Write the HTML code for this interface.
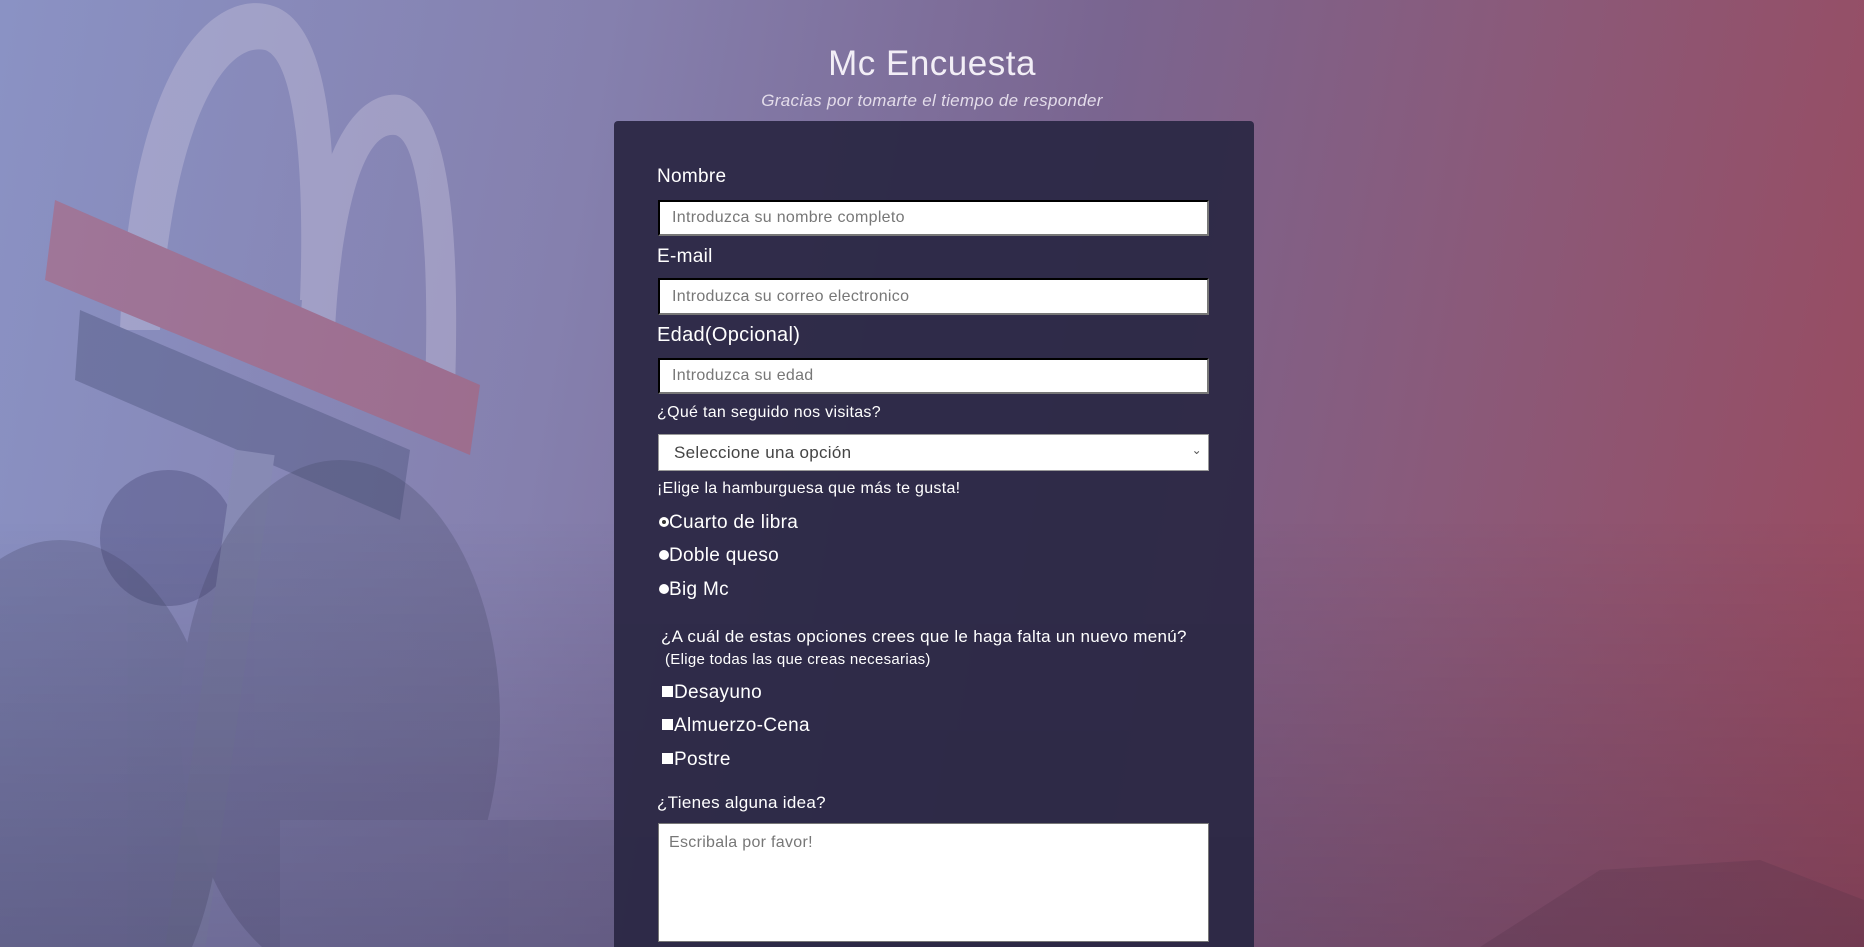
<!DOCTYPE html>
<html><head><meta charset="utf-8"><style>
*{box-sizing:border-box;margin:0;padding:0}
html,body{width:1864px;height:947px;overflow:hidden}
body{font-family:"Liberation Sans",sans-serif;position:relative;
background:linear-gradient(100deg,#8a92c4 0%,#8580ae 30%,#7a6590 55%,#8a5a7a 75%,#9a4a5e 100%);}
.bg{position:absolute;left:0;top:0}
.shade{position:absolute;left:0;top:0;width:1864px;height:947px;
background:linear-gradient(180deg,rgba(0,0,0,0) 55%,rgba(40,30,60,.25) 100%);}
h1{position:absolute;left:0;width:1864px;top:44px;text-align:center;font-weight:400;font-size:35px;color:#f2eef6;letter-spacing:.5px}
.sub{position:absolute;left:0;width:1864px;top:91px;text-align:center;font-style:italic;font-size:17px;color:#e3dcea;letter-spacing:.3px}
.panel{position:absolute;left:614px;top:121px;width:640px;height:826px;background:rgba(42,39,68,.94);border-radius:4px 4px 0 0}
.t{position:absolute;color:#fff;white-space:nowrap;letter-spacing:.3px}
.in{position:absolute;left:658px;width:551px;background:#fff;border:2px inset #777;border-top-color:#222;border-left-color:#222;color:#777;font-size:16px;padding-left:12px;display:flex;align-items:center;letter-spacing:.3px}
.sel{border:1px solid #999;padding-left:15px;font-size:17px;color:#444}
.rad{display:inline-block;width:10px;height:10px;border-radius:50%;background:#fff;vertical-align:1px}
.chk{display:inline-block;width:11px;height:11px;background:#fff;margin-right:1px;vertical-align:1px}
</style></head><body>
<svg class="bg" width="1864" height="947" viewBox="0 0 1864 947">
<g opacity=".4">
<path d="M120 330 C130 60 215 -10 270 5 C330 20 340 150 330 300 L300 300 C305 170 295 60 265 50 C220 40 170 140 160 330Z" fill="#c8c4dc"/>
<path d="M300 330 C310 140 360 90 400 95 C450 105 460 230 455 390 L425 390 C430 250 420 140 395 135 C360 130 340 230 335 330Z" fill="#c8c4dc"/>
<path d="M55 200 L480 385 L470 455 L45 280Z" fill="#c0505c"/>
<path d="M80 310 L410 450 L400 520 L75 380Z" fill="#4a5078"/>
<circle cx="168" cy="538" r="68" fill="#4a4a78"/>
<rect x="200" y="450" width="40" height="500" fill="#8890b0" transform="rotate(8 220 700)"/>
</g>
<g opacity=".25">
<ellipse cx="60" cy="800" rx="160" ry="260" fill="#3a3d5a"/>
<ellipse cx="340" cy="720" rx="160" ry="260" fill="#3d3f5c"/>
<rect x="280" y="820" width="340" height="130" fill="#5a5a80"/>
<path d="M1480 947 L1600 870 L1760 860 L1864 900 L1864 947Z" fill="#5a3348"/>
</g>
</svg>
<div class="shade"></div>
<h1>Mc Encuesta</h1>
<div class="sub">Gracias por tomarte el tiempo de responder</div>
<div class="panel"></div>
<div class="t" style="left:657px;top:166px;font-size:19px">Nombre</div>
<div class="in" style="top:200px;height:36px">Introduzca su nombre completo</div>
<div class="t" style="left:657px;top:246px;font-size:19px">E-mail</div>
<div class="in" style="top:278px;height:37px">Introduzca su correo electronico</div>
<div class="t" style="left:657px;top:324px;font-size:20px">Edad(Opcional)</div>
<div class="in" style="top:358px;height:36px">Introduzca su edad</div>
<div class="t" style="left:657px;top:404px;font-size:16px">¿Qué tan seguido nos visitas?</div>
<div class="in sel" style="top:434px;height:37px">Seleccione una opción<span style="position:absolute;right:6px;top:8px;font-size:12px;color:#555">&#8964;</span></div>
<div class="t" style="left:657px;top:480px;font-size:16px">¡Elige la hamburguesa que más te gusta!</div>
<div class="t" style="left:659px;top:512px;font-size:19px"><span class="rad" style="box-shadow:inset 0 0 0 3px #fff;background:#333"></span>Cuarto de libra</div>
<div class="t" style="left:659px;top:545px;font-size:19px"><span class="rad"></span>Doble queso</div>
<div class="t" style="left:659px;top:579px;font-size:19px"><span class="rad"></span>Big Mc</div>
<div class="t" style="left:661px;top:627px;font-size:17px">¿A cuál de estas opciones crees que le haga falta un nuevo menú?</div>
<div class="t" style="left:665px;top:651px;font-size:15px">(Elige todas las que creas necesarias)</div>
<div class="t" style="left:662px;top:682px;font-size:19px"><span class="chk"></span>Desayuno</div>
<div class="t" style="left:662px;top:715px;font-size:19px"><span class="chk"></span>Almuerzo-Cena</div>
<div class="t" style="left:662px;top:749px;font-size:19px"><span class="chk"></span>Postre</div>
<div class="t" style="left:657px;top:793px;font-size:17px">¿Tienes alguna idea?</div>
<div class="in" style="top:823px;height:119px;align-items:flex-start;padding:10px 0 0 10px;border:1px solid #777">Escribala por favor!</div>
</body></html>
